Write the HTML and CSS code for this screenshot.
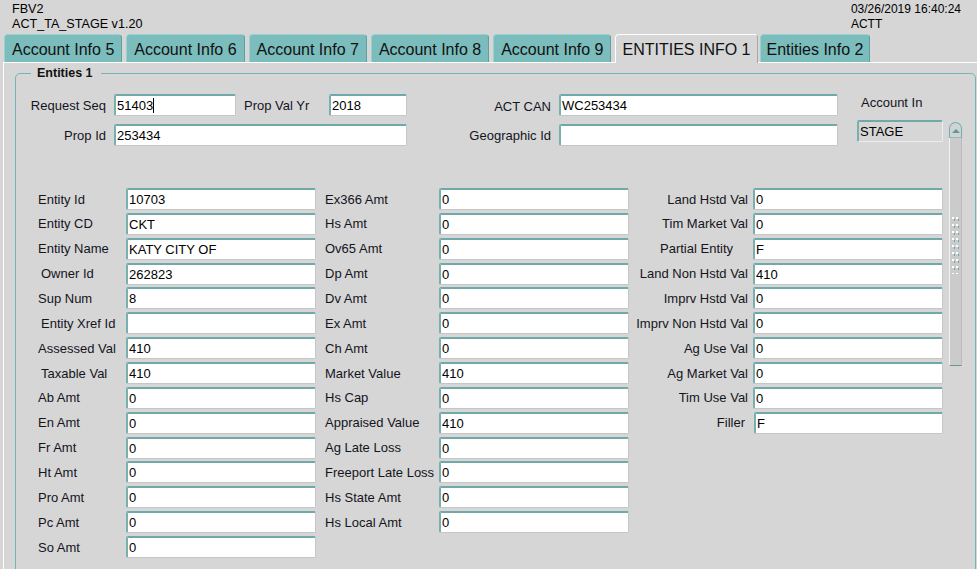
FILE: index.html
```html
<!DOCTYPE html>
<html>
<head>
<meta charset="utf-8">
<title>FBV2 - ACT_TA_STAGE</title>
<link rel="stylesheet" href="styles.css">
</head>
<body>
<div class="header">
  <div class="hdr-left">
    <div>FBV2</div>
    <div>ACT_TA_STAGE v1.20</div>
  </div>
  <div class="hdr-right">
    <div>03/26/2019 16:40:24</div>
    <div>ACTT</div>
  </div>
</div>

<div class="tabs">
  <div class="tab">Account Info 5</div>
  <div class="tab">Account Info 6</div>
  <div class="tab">Account Info 7</div>
  <div class="tab">Account Info 8</div>
  <div class="tab">Account Info 9</div>
  <div class="tab active">ENTITIES INFO 1</div>
  <div class="tab last">Entities Info 2</div>
</div>

<div class="panel">
  <fieldset class="group">
    <legend>Entities 1</legend>

    <div class="top">
      <div class="top-grid">
        <div class="lbl r">Request Seq</div>
        <div class="fld w122">51403<span class="caret"></span></div>
        <div class="lbl">Prop Val Yr</div>
        <div class="fld">2018</div>
        <div class="lbl r low">ACT CAN</div>
        <div class="fld">WC253434</div>

        <div class="lbl r">Prop Id</div>
        <div class="fld span3">253434</div>
        <div class="lbl r">Geographic Id</div>
        <div class="fld"></div>
      </div>
      <div class="acct">
        <div class="acct-lbl">Account In</div>
        <div class="fld stage">STAGE</div>
      </div>
    </div>

    <div class="main">
      <div class="col c1">
        <div class="lbl">Entity Id</div><div class="fld">10703</div>
        <div class="lbl">Entity CD</div><div class="fld">CKT</div>
        <div class="lbl">Entity Name</div><div class="fld">KATY CITY OF</div>
        <div class="lbl ind">Owner Id</div><div class="fld">262823</div>
        <div class="lbl">Sup Num</div><div class="fld">8</div>
        <div class="lbl ind">Entity Xref Id</div><div class="fld"></div>
        <div class="lbl">Assessed Val</div><div class="fld">410</div>
        <div class="lbl ind">Taxable Val</div><div class="fld">410</div>
        <div class="lbl">Ab Amt</div><div class="fld">0</div>
        <div class="lbl">En Amt</div><div class="fld">0</div>
        <div class="lbl">Fr Amt</div><div class="fld">0</div>
        <div class="lbl">Ht Amt</div><div class="fld">0</div>
        <div class="lbl">Pro Amt</div><div class="fld">0</div>
        <div class="lbl">Pc Amt</div><div class="fld">0</div>
        <div class="lbl">So Amt</div><div class="fld">0</div>
      </div>
      <div class="col c2">
        <div class="lbl">Ex366 Amt</div><div class="fld">0</div>
        <div class="lbl">Hs Amt</div><div class="fld">0</div>
        <div class="lbl">Ov65 Amt</div><div class="fld">0</div>
        <div class="lbl">Dp Amt</div><div class="fld">0</div>
        <div class="lbl">Dv Amt</div><div class="fld">0</div>
        <div class="lbl">Ex Amt</div><div class="fld">0</div>
        <div class="lbl">Ch Amt</div><div class="fld">0</div>
        <div class="lbl">Market Value</div><div class="fld">410</div>
        <div class="lbl">Hs Cap</div><div class="fld">0</div>
        <div class="lbl">Appraised Value</div><div class="fld">410</div>
        <div class="lbl">Ag Late Loss</div><div class="fld">0</div>
        <div class="lbl">Freeport Late Loss</div><div class="fld">0</div>
        <div class="lbl">Hs State Amt</div><div class="fld">0</div>
        <div class="lbl">Hs Local Amt</div><div class="fld">0</div>
      </div>
      <div class="col c3">
        <div class="lbl">Land Hstd Val</div><div class="fld">0</div>
        <div class="lbl">Tim Market Val</div><div class="fld">0</div>
        <div class="lbl partial">Partial Entity</div><div class="fld">F</div>
        <div class="lbl">Land Non Hstd Val</div><div class="fld">410</div>
        <div class="lbl">Imprv Hstd Val</div><div class="fld">0</div>
        <div class="lbl">Imprv Non Hstd Val</div><div class="fld">0</div>
        <div class="lbl">Ag Use Val</div><div class="fld">0</div>
        <div class="lbl">Ag Market Val</div><div class="fld">0</div>
        <div class="lbl">Tim Use Val</div><div class="fld">0</div>
        <div class="lbl filler">Filler</div><div class="fld filler-fld">F</div>
      </div>
    </div>
  </fieldset>

  <div class="vscroll">
    <div class="vs-btn"></div>
    <div class="vs-track"><div class="vs-grip"></div></div>
  </div>
</div>
</body>
</html>
```
FILE: styles.css
```css
html, body {
  margin: 0;
  overflow: hidden;
}
body {
  width: 977px;
  height: 569px;
  background: #d6d6d6;
  font-family: "Liberation Sans", Arial, sans-serif;
  font-size: 13px;
  color: #111;
}

/* header */
.header {
  display: flex;
  justify-content: space-between;
  box-sizing: border-box;
  height: 34px;
  padding: 2px 16px 0 12px;
  line-height: 14.6px;
  color: #000;
}
.hdr-left { font-size: 12.6px; }
.hdr-right { font-size: 12px; }

/* tabs */
.tabs {
  display: flex;
  align-items: flex-end;
  gap: 4px;
  height: 28px;
  padding-left: 4px;
}
.tab {
  box-sizing: border-box;
  height: 28px;
  padding: 3px 7px 0;
  font-size: 16px;
  line-height: 24px;
  white-space: nowrap;
  color: #111;
  background: #7bbcbc;
  border: 1px solid #9ad0d0;
  border-right-color: #5f9f9f;
  border-bottom: none;
  border-radius: 4px 4px 0 0;
}
.tab.active {
  position: relative;
  z-index: 1;
  height: 29px;
  margin-bottom: -1px;
  padding: 3px 6px 0;
  background: #d6d6d6;
  border-color: #ffffff;
  border-right-color: #a8a8a8;
}
.tab.last {
  margin-left: -2px;
  padding: 3px 6px 0;
}

/* panel */
.panel {
  position: relative;
  box-sizing: border-box;
  height: 507px;
  overflow: hidden;
  margin-left: 3px;
  border-top: 1px solid #ffffff;
  border-left: 1px solid #ffffff;
}
.group {
  margin: 3px 1px 0 11px;
  padding: 0 0 40px;
  border: 1px solid #74b4b4;
  border-radius: 5px;
  min-inline-size: 0;
}
.group legend {
  margin-left: 15px;
  padding: 0 8px 0 6px;
  font-size: 12.5px;
  font-weight: bold;
  line-height: 14px;
  color: #111;
}

.lbl {
  white-space: nowrap;
  color: #14141c;
}
.lbl.r {
  text-align: right;
  padding-right: 8px;
}
.lbl.low { padding-top: 3px; }

.fld {
  box-sizing: border-box;
  height: 22px;
  padding-left: 1px;
  line-height: 19px;
  color: #000;
  background: #ffffff;
  border: 1px solid #c6c6c6;
  border-top: 2px solid #6fa9a9;
  border-left: 2px solid #78b0b0;
  border-radius: 2px;
  white-space: nowrap;
  overflow: hidden;
}
.caret {
  display: inline-block;
  width: 0;
  height: 15px;
  border-right: 1px solid #000;
  vertical-align: -3px;
}

/* top block */
.top {
  display: flex;
  align-items: flex-start;
  margin-top: 14px;
}
.top-grid {
  display: grid;
  grid-template-columns: 98px 130px 85px 78px 152px 279px;
  grid-template-rows: 22px 22px;
  row-gap: 8px;
  align-items: center;
}
.w122 { width: 122px; }
.span3 { grid-column: 2 / 5; }

.acct {
  width: 86px;
  margin-left: 19px;
}
.acct-lbl {
  margin-top: 2px;
  padding-left: 4px;
  line-height: 14px;
  color: #14141c;
}
.fld.stage {
  margin-top: 10px;
  background: #d6d6d6;
  border-right-color: #ededed;
  border-bottom-color: #ededed;
}

/* main grid */
.main {
  display: flex;
  margin-top: 42px;
}
.col {
  display: grid;
  grid-auto-rows: 22px;
  row-gap: 2.86px;
  align-items: center;
  align-content: start;
}
.c1 { grid-template-columns: 110px 190px; }
.c1 .lbl { padding-left: 22px; }
.c1 .lbl.ind { padding-left: 25px; }
.c2 { grid-template-columns: 123px 190px; }
.c2 .lbl { padding-left: 9px; }
.c3 { grid-template-columns: 124px 190px; }
.c3 .lbl {
  text-align: right;
  padding-right: 5px;
}
.c3 .lbl.partial { padding-right: 20px; }
.c3 .lbl.filler { padding-right: 8px; }
.fld.filler-fld { margin-left: 1px; }

/* vertical scrollbar */
.vscroll {
  position: absolute;
  left: 945px;
  top: 59px;
  width: 13px;
  height: 244px;
  display: flex;
  flex-direction: column;
}
.vs-btn {
  box-sizing: border-box;
  height: 16px;
  display: flex;
  align-items: center;
  justify-content: center;
  background: #d3d3d3;
  border: 1px solid #6aaeae;
  border-bottom: 1px solid #8fbcbc;
  border-radius: 7px 7px 0 0;
}
.vs-btn::after {
  content: "";
  margin-top: 2px;
  border-left: 4px solid transparent;
  border-right: 4px solid transparent;
  border-bottom: 4px solid #5f9a9a;
}
.vs-track {
  flex: 1;
  display: flex;
  align-items: center;
  justify-content: center;
  background: #cbcbcb;
  border-left: 1px solid #f2f2f2;
  border-right: 1px solid #bcbcbc;
  border-bottom: 1px solid #5f9a9a;
}
.vs-grip {
  width: 7px;
  height: 57px;
  margin-top: -12px;
  background:
    radial-gradient(circle at 1px 1px, #ffffff 0.7px, transparent 1px) 0 0 / 4px 7px,
    radial-gradient(circle at 2.5px 3px, #6aa6a6 0.6px, transparent 1px) 0 0 / 4px 7px;
}
```
